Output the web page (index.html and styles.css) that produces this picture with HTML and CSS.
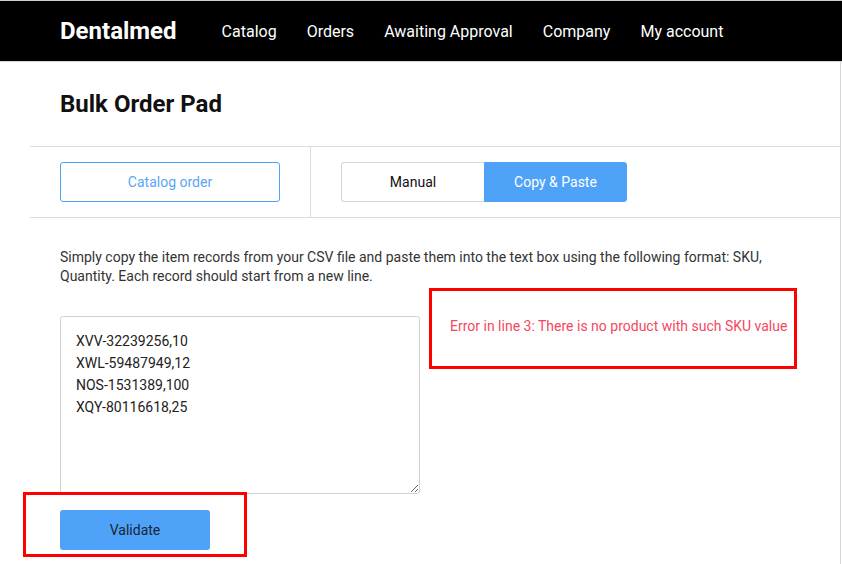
FILE: index.html
```html
<!DOCTYPE html>
<html>
<head>
<meta charset="utf-8">
<link rel="stylesheet" href="styles.css">
</head>
<body>
<div class="page">
  <header class="topbar">
    <div class="logo">Dentalmed</div>
    <nav class="nav">
      <a>Catalog</a>
      <a>Orders</a>
      <a>Awaiting Approval</a>
      <a>Company</a>
      <a>My account</a>
    </nav>
  </header>
  <main class="main">
    <h1 class="title">Bulk Order Pad</h1>
    <div class="tabs">
      <div class="tab-left">
        <button class="btn-outline">Catalog order</button>
      </div>
      <div class="tab-right">
        <div class="segmented">
          <button class="seg">Manual</button>
          <button class="seg seg-active">Copy &amp; Paste</button>
        </div>
      </div>
    </div>
    <div class="content">
      <p class="hint">Simply copy the item records from your CSV file and paste them into the text box using the following format: SKU, Quantity. Each record should start from a new line.</p>
      <div class="row">
        <textarea class="input">XVV-32239256,10
XWL-59487949,12
NOS-1531389,100
XQY-80116618,25</textarea>
        <div class="error">Error in line 3: There is no product with such SKU value</div>
      </div>
      <button class="btn-primary">Validate</button>
    </div>
    <div class="mark mark-error"></div>
    <div class="mark mark-validate"></div>
  </main>
</div>
</body>
</html>
```
FILE: styles.css
```css
* { box-sizing: border-box; }
html, body { margin: 0; padding: 0; background: #fff; }
body { font-family: Roboto, "Liberation Sans", sans-serif; color: #222; }
.page { width: 842px; height: 564px; overflow: hidden; }
.topbar {
  height: 62px;
  background: #000;
  border-top: 1px solid #cfcfcf;
  border-bottom: 1px solid #d6d6d6;
  display: flex;
  align-items: center;
  padding-left: 60px;
}
.logo { color: #fff; font-weight: 700; font-size: 24px; letter-spacing: 0; }
.nav { display: flex; gap: 30px; margin-left: 45px; }
.nav a { color: #fff; font-size: 16px; }
.main {
  position: relative;
  width: 841px;
  height: 502px;
  border-right: 1px solid #d6d6d6;
}
.title {
  margin: 0;
  height: 84px;
  padding-left: 60px;
  display: flex;
  align-items: center;
  font-size: 24px;
  font-weight: 700;
  color: #111;
}
.tabs {
  margin-left: 30px;
  display: flex;
  border-top: 1px solid #dcdcdc;
  border-bottom: 1px solid #dcdcdc;
}
.tab-left {
  width: 281px;
  padding: 15px 30px;
  border-right: 1px solid #dcdcdc;
}
.tab-right { padding: 15px 30px; }
button { font-family: inherit; cursor: pointer; }
.btn-outline {
  width: 220px;
  height: 40px;
  background: #fff;
  border: 1px solid #4ea3f8;
  border-radius: 3px;
  color: #5aa6f5;
  font-size: 14px;
}
.segmented { display: flex; }
.seg {
  width: 143px;
  height: 40px;
  background: #fff;
  border: 1px solid #d6d6d6;
  border-right: none;
  border-radius: 3px 0 0 3px;
  color: #111;
  font-size: 14px;
}
.seg-active {
  background: #4ea3f8;
  border: 1px solid #4ea3f8;
  border-radius: 0 3px 3px 0;
  color: #fff;
}
.content { padding: 30px 30px 0 60px; }
.hint {
  margin: 0;
  font-size: 14px;
  line-height: 19px;
  color: #333;
}
.row { display: flex; margin-top: 30px; }
.input {
  width: 360px;
  height: 178px;
  border: 1px solid #d2d2d2;
  border-radius: 3px;
  padding: 13px 15px;
  font-family: Roboto, "Liberation Sans", sans-serif;
  font-size: 14px;
  line-height: 22px;
  color: #222;
  resize: vertical;
  outline: none;
  margin: 0;
}
.error {
  padding-left: 30px;
  padding-top: 1px;
  font-size: 14px;
  line-height: 18px;
  color: #f4475e;
}
.btn-primary {
  margin-top: 16px;
  width: 150px;
  height: 40px;
  background: #4ea3f8;
  border: none;
  border-radius: 3px;
  color: #1c2333;
  font-size: 14px;
}
.mark { position: absolute; border: 3px solid #ff0000; }
.mark-error { left: 429px; top: 226px; width: 368px; height: 81px; }
.mark-validate { left: 23px; top: 430px; width: 224px; height: 65px; }
```
